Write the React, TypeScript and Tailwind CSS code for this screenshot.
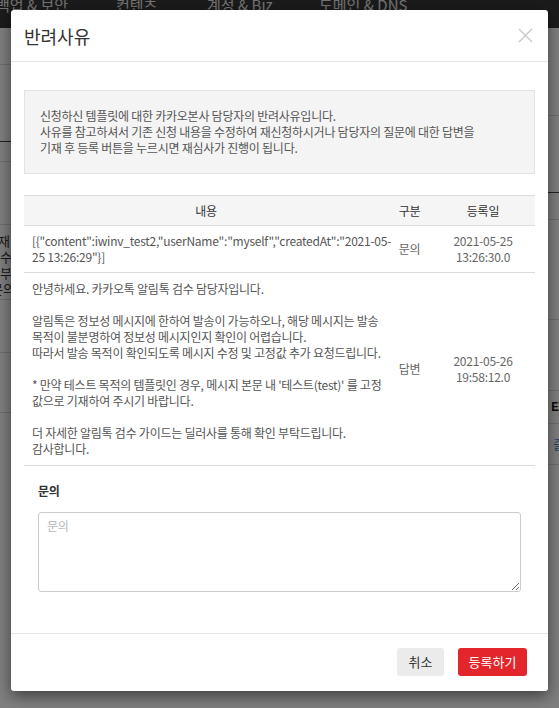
import React from "react";

function Line({ children }: { children: React.ReactNode }) {
  return <span className="block whitespace-nowrap">{children}</span>;
}

export default function App() {
  return (
    <div className="relative w-[559px] h-[708px] overflow-hidden bg-white font-['Noto_Sans_CJK_KR','Noto_Sans',sans-serif]">
      {/* background page */}
      <div className="h-[28px] bg-[#363636] flex items-start text-[15px] leading-[15px] text-[#e6e6e6] overflow-hidden">
        <div className="w-[116px] shrink-0 mt-[-3px] whitespace-nowrap">
          <span className="ml-[-4px]">백업 &amp; 보안</span>
        </div>
        <div className="w-[91px] shrink-0 mt-[-3px] whitespace-nowrap">컨텐츠</div>
        <div className="w-[112px] shrink-0 mt-[-3px] whitespace-nowrap">계정 &amp; Biz</div>
        <div className="shrink-0 mt-[-3px] whitespace-nowrap">도메인 &amp; DNS</div>
      </div>
      <div className="flex justify-between">
        <div className="w-[11px] flex flex-col overflow-hidden text-[13px] leading-[16px] text-[#333]">
          <div className="h-[37px] border-b border-[#ddd]" />
          <div className="h-[77px] border-b border-[#444]" />
          <div className="h-[20px] border-b border-[#ddd]" />
          <div className="h-[63px] border-b border-[#ddd]" />
          <div className="h-[75px] border-b border-[#ddd] flex flex-col items-end pt-[8px]">
            <span className="whitespace-nowrap mr-[1px]">재</span>
            <span className="whitespace-nowrap mr-[-1px]">수</span>
            <span className="whitespace-nowrap mr-[-1px]">부</span>
            <span className="whitespace-nowrap mr-[-4px]">문의</span>
          </div>
          <div className="h-[53px] border-b border-[#ddd]" />
          <div className="h-[60px] border-b border-[#ddd]" />
        </div>
        <div className="w-[11px] flex flex-col overflow-hidden text-[13px] leading-[16px]">
          <div className="h-[88px] border-b border-[#ddd]" />
          <div className="h-[77px] border-b border-[#444]" />
          <div className="h-[27px] border-b border-[#ddd]" />
          <div className="h-[100px] border-b border-[#ddd]" />
          <div className="h-[71px] border-b border-[#ddd]" />
          <div className="h-[33px] border-b border-[#ddd] flex items-center pl-[3px] font-bold text-[#111]">
            <span className="whitespace-nowrap">타</span>
          </div>
          <div className="h-[41px] border-b border-[#ddd] flex items-center pl-[5px] text-[#4a7fc0]">
            <span className="whitespace-nowrap">즐</span>
          </div>
        </div>
      </div>

      {/* overlay */}
      <div className="absolute inset-0 bg-black/50" />

      {/* modal */}
      <div className="absolute left-[11px] top-[10px] w-[537px] bg-white rounded-[3px] shadow-[0_5px_15px_rgba(0,0,0,0.5)]">
        <div className="flex items-center justify-between h-[52px] pl-[13px] pr-[15px] border-b border-[#e5e5e5]">
          <h2 className="text-[18px] leading-[24px] text-[#333]">반려사유</h2>
          <svg width="15" height="15" viewBox="0 0 15 15" fill="none" stroke="#c9c9c9" strokeWidth="1.4">
            <path d="M1 1L14 14M14 1L1 14" />
          </svg>
        </div>

        <div className="px-[13px] pt-[28px] pb-[41px] tracking-[-0.25px]">
          <div className="border border-[#e3e3e3] bg-[#f4f4f4] px-[15px] py-[17px] text-[12px] leading-[16px] text-[#555]">
            <Line>신청하신 템플릿에 대한 카카오본사 담당자의 반려사유입니다.</Line>
            <Line>사유를 참고하셔서 기존 신청 내용을 수정하여 재신청하시거나 담당자의 질문에 대한 답변을</Line>
            <Line>기재 후 등록 버튼을 누르시면 재심사가 진행이 됩니다.</Line>
          </div>

          <table className="mt-[21px] w-full table-fixed border-collapse text-[12px] leading-[16px]">
            <colgroup>
              <col className="w-[364px]" />
              <col className="w-[43px]" />
              <col className="w-[104px]" />
            </colgroup>
            <thead>
              <tr className="bg-[#f5f5f5] border-t border-b border-[#dcdcdc] text-[#333]">
                <th className="h-[30px] font-normal text-center">내용</th>
                <th className="h-[30px] font-normal text-center">구분</th>
                <th className="h-[30px] font-normal text-center">등록일</th>
              </tr>
            </thead>
            <tbody className="text-[#555]">
              <tr className="border-b border-[#dcdcdc]">
                <td className="px-[8px] py-[7px] align-middle">
                  <Line>[&#123;"content":iwinv_test2,"userName":"myself","createdAt":"2021-05-</Line>
                  <Line>25 13:26:29"&#125;]</Line>
                </td>
                <td className="text-center align-middle text-[#666]">문의</td>
                <td className="text-center align-middle text-[#666]">
                  <Line>2021-05-25</Line>
                  <Line>13:26:30.0</Line>
                </td>
              </tr>
              <tr className="border-b border-[#dcdcdc]">
                <td className="px-[8px] py-[8px] align-middle">
                  <Line>안녕하세요. 카카오톡 알림톡 검수 담당자입니다.</Line>
                  <Line>&nbsp;</Line>
                  <Line>알림톡은 정보성 메시지에 한하여 발송이 가능하오나, 해당 메시지는 발송</Line>
                  <Line>목적이 불분명하여 정보성 메시지인지 확인이 어렵습니다.</Line>
                  <Line>따라서 발송 목적이 확인되도록 메시지 수정 및 고정값 추가 요청드립니다.</Line>
                  <Line>&nbsp;</Line>
                  <Line>* 만약 테스트 목적의 템플릿인 경우, 메시지 본문 내 '테스트(test)' 를 고정</Line>
                  <Line>값으로 기재하여 주시기 바랍니다.</Line>
                  <Line>&nbsp;</Line>
                  <Line>더 자세한 알림톡 검수 가이드는 딜러사를 통해 확인 부탁드립니다.</Line>
                  <Line>감사합니다.</Line>
                </td>
                <td className="text-center align-middle text-[#666]">답변</td>
                <td className="text-center align-middle text-[#666]">
                  <Line>2021-05-26</Line>
                  <Line>19:58:12.0</Line>
                </td>
              </tr>
            </tbody>
          </table>

          <div className="px-[14px] pt-[17px]">
            <div className="text-[12px] leading-[16px] font-bold text-[#333]">문의</div>
            <textarea
              placeholder="문의"
              className="mt-[13px] block w-[483px] h-[80px] border border-[#ccc] rounded-[3px] px-[8px] py-[5px] text-[12px] leading-[16px] text-[#555] placeholder:text-[#b5b5b5] outline-none"
            />
          </div>
        </div>

        <div className="flex justify-end gap-[14px] border-t border-[#e5e5e5] pt-[14px] pb-[15px] pr-[21px]">
          <button className="w-[47px] h-[28px] rounded-[3px] bg-[#ebebeb] text-[13px] text-[#333]">취소</button>
          <button className="w-[69px] h-[28px] rounded-[3px] bg-[#e3262b] text-[13px] text-white">등록하기</button>
        </div>
      </div>
    </div>
  );
}
